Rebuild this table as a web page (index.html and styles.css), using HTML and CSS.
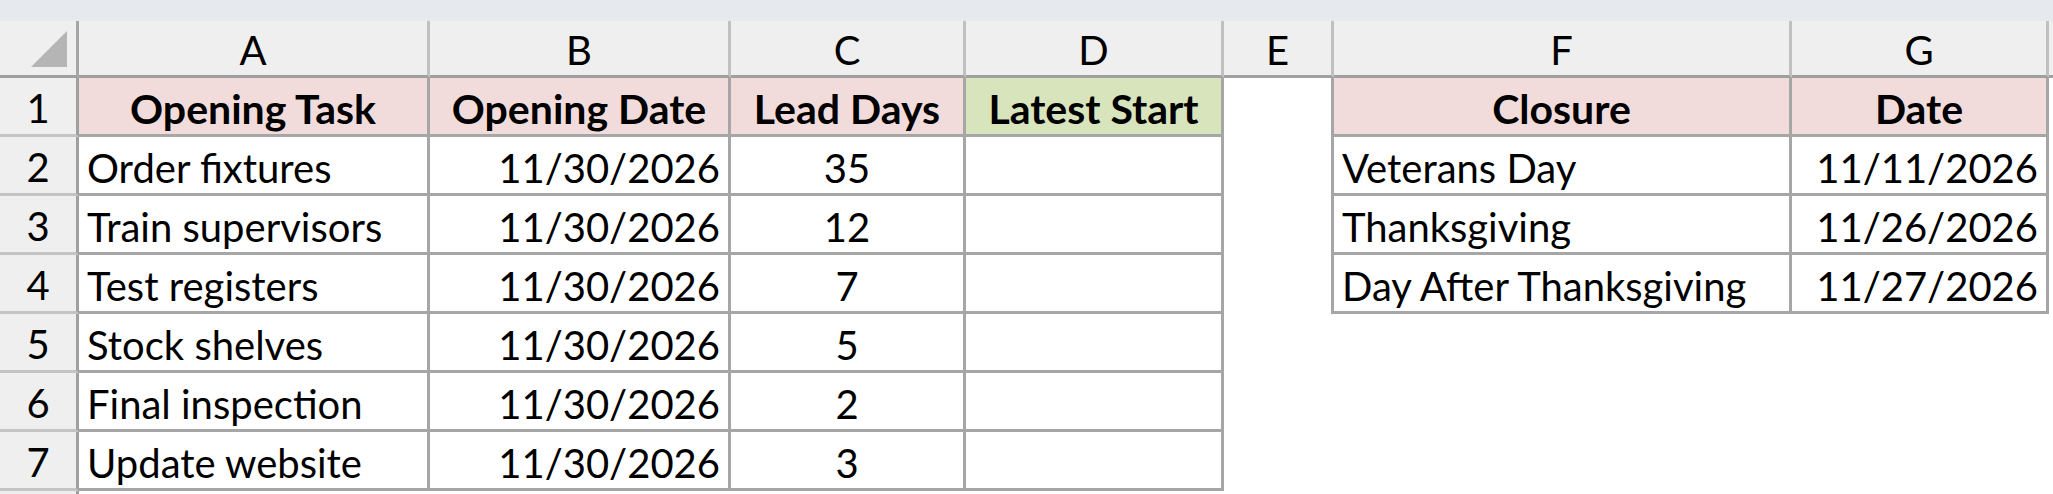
FILE: index.html
```html
<!DOCTYPE html>
<html lang="en">
<head>
    <meta charset="UTF-8">
    <meta name="viewport" content="width=device-width, initial-scale=1.0">
    <link rel="stylesheet" href="styles.css">
    <title>Opening schedule</title>
</head>
<body>

    <div class="topbar"></div>

    <div class="sheet">
        <!-- column headers -->
        <div class="corner">
            <svg class="corner-mark" viewBox="0 0 36 36">
                <polygon points="36,0 36,36 0,36" fill="#b5b5b5"/>
            </svg>
        </div>
        <div class="col-head">A</div>
        <div class="col-head">B</div>
        <div class="col-head">C</div>
        <div class="col-head">D</div>
        <div class="col-head">E</div>
        <div class="col-head">F</div>
        <div class="col-head">G</div>
        <div class="col-head col-rest"></div>

        <!-- row 1 -->
        <div class="row-head">1</div>
        <div class="cell head pink center">Opening Task</div>
        <div class="cell head pink center">Opening Date</div>
        <div class="cell head pink center">Lead Days</div>
        <div class="cell head green center">Latest Start</div>
        <div class="blank edge"></div>
        <div class="cell head pink center">Closure</div>
        <div class="cell head pink center">Date</div>
        <div class="blank"></div>

        <!-- row 2 -->
        <div class="row-head">2</div>
        <div class="cell">Order fixtures</div>
        <div class="cell right">11/30/2026</div>
        <div class="cell center">35</div>
        <div class="cell"></div>
        <div class="blank edge"></div>
        <div class="cell">Veterans Day</div>
        <div class="cell right">11/11/2026</div>
        <div class="blank"></div>

        <!-- row 3 -->
        <div class="row-head">3</div>
        <div class="cell">Train supervisors</div>
        <div class="cell right">11/30/2026</div>
        <div class="cell center">12</div>
        <div class="cell"></div>
        <div class="blank edge"></div>
        <div class="cell">Thanksgiving</div>
        <div class="cell right">11/26/2026</div>
        <div class="blank"></div>

        <!-- row 4 -->
        <div class="row-head">4</div>
        <div class="cell">Test registers</div>
        <div class="cell right">11/30/2026</div>
        <div class="cell center">7</div>
        <div class="cell"></div>
        <div class="blank edge"></div>
        <div class="cell">Day After Thanksgiving</div>
        <div class="cell right">11/27/2026</div>
        <div class="blank"></div>

        <!-- row 5 -->
        <div class="row-head">5</div>
        <div class="cell">Stock shelves</div>
        <div class="cell right">11/30/2026</div>
        <div class="cell center">5</div>
        <div class="cell"></div>
        <div class="blank"></div>
        <div class="blank"></div>
        <div class="blank"></div>
        <div class="blank"></div>

        <!-- row 6 -->
        <div class="row-head">6</div>
        <div class="cell">Final inspection</div>
        <div class="cell right">11/30/2026</div>
        <div class="cell center">2</div>
        <div class="cell"></div>
        <div class="blank"></div>
        <div class="blank"></div>
        <div class="blank"></div>
        <div class="blank"></div>

        <!-- row 7 -->
        <div class="row-head">7</div>
        <div class="cell">Update website</div>
        <div class="cell right">11/30/2026</div>
        <div class="cell center">3</div>
        <div class="cell"></div>
        <div class="blank"></div>
        <div class="blank"></div>
        <div class="blank"></div>
        <div class="blank"></div>

        <!-- next row, only its header edge shows -->
        <div class="row-head row-cut"></div>
    </div>

</body>
</html>
```

FILE: styles.css
```css
* {
    margin: 0;
    padding: 0;
    box-sizing: border-box;
}

body {
    width: 2053px;
    height: 494px;
    overflow: hidden;
    background-color: white;
    font-family: Lato, "Liberation Sans", sans-serif;
    font-size: 40px;
    color: #000;
}

.topbar {
    height: 21px;
    background-color: #e6eaee;
}

.sheet {
    display: grid;
    grid-template-columns: 79px 351px 301px 235px 258px 110px 458px 257px 1fr;
    grid-template-rows: 57px repeat(7, 59px) 3px;
}

/* headers */
.corner {
    background-color: #efefef;
    border-right: 3px solid #a6a6a6;
    border-bottom: 3px solid #a0a0a0;
    display: flex;
    justify-content: flex-end;
    align-items: flex-end;
    padding: 0 9px 8px 0;
}
.corner-mark {
    width: 36px;
    height: 36px;
}

.col-head {
    background-color: #efefef;
    border-right: 3px solid #c0c0c0;
    border-bottom: 3px solid #a0a0a0;
    display: flex;
    justify-content: center;
    align-items: center;
    padding-top: 4px;
}
.col-rest {
    border-right: none;
}

.row-head {
    grid-column: 1;
    background-color: #efefef;
    border-right: 3px solid #a0a0a0;
    border-bottom: 3px solid #c4c4c4;
    display: flex;
    justify-content: center;
    align-items: center;
    padding-top: 4px;
}
.row-cut {
    border-bottom: none;
    padding: 0;
}

/* cells */
.cell {
    border-right: 3px solid #a6a6a6;
    border-bottom: 3px solid #a6a6a6;
    display: flex;
    align-items: center;
    padding: 5px 8px 0 8px;
    white-space: nowrap;
}
.center {
    justify-content: center;
}
.right {
    justify-content: flex-end;
}
.head {
    font-weight: bold;
    font-size: 41px;
}
.pink {
    background-color: #f2dcdb;
}
.green {
    background-color: #d8e4bc;
}

.blank {
    background-color: white;
}
.edge {
    border-right: 3px solid #a6a6a6;
}
```
